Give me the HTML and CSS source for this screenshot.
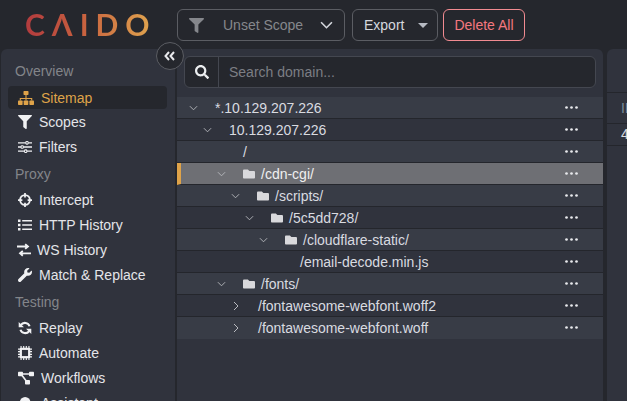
FILE: index.html
```html
<!DOCTYPE html>
<html lang="en">
<head>
<meta charset="utf-8">
<title>Caido Sitemap</title>
<link rel="stylesheet" href="styles.css">
</head>
<body>
<svg class="sprite" aria-hidden="true">
  <symbol id="i-filter" viewBox="0 0 512 512"><path d="M487.976 0H24.028C2.71 0-8.047 25.866 7.058 40.971L192 225.941V432c0 7.831 3.821 15.17 10.237 19.662l80 55.98C298.02 518.69 320 507.493 320 487.98V225.941l184.947-184.97C520.021 25.896 509.338 0 487.976 0z"/></symbol>
  <symbol id="i-search" viewBox="0 0 512 512"><path d="M505 442.7L405.3 343c-4.5-4.5-10.6-7-17-7H372c27.6-35.3 44-79.7 44-128C416 93.1 322.9 0 208 0S0 93.1 0 208s93.1 208 208 208c48.3 0 92.7-16.4 128-44v16.3c0 6.4 2.5 12.5 7 17l99.7 99.7c9.4 9.4 24.6 9.4 33.9 0l28.3-28.3c9.4-9.4 9.4-24.6.1-34zM208 336c-70.7 0-128-57.2-128-128 0-70.7 57.2-128 128-128 70.7 0 128 57.2 128 128 0 70.7-57.2 128-128 128z"/></symbol>
  <symbol id="i-folder" viewBox="0 0 512 512"><path d="M464 128H272l-64-64H48C21.49 64 0 85.49 0 112v288c0 26.51 21.49 48 48 48h416c26.51 0 48-21.49 48-48V176c0-26.51-21.49-48-48-48z"/></symbol>
  <symbol id="i-wrench" viewBox="0 0 512 512"><path d="M507.73 109.1c-2.24-9.03-13.54-12.09-20.12-5.51l-74.36 74.36-67.88-11.31-11.31-67.88 74.36-74.36c6.62-6.62 3.43-17.9-5.66-20.16-47.38-11.74-99.55.91-136.58 37.93-39.64 39.64-50.55 97.1-34.05 147.2L18.74 402.76c-24.99 24.99-24.99 65.51 0 90.5 24.99 24.99 65.51 24.99 90.5 0l213.21-213.21c50.12 16.71 107.47 5.68 147.37-34.22 37.07-37.07 49.7-89.32 37.91-136.73z"/></symbol>
  <symbol id="i-sitemap" viewBox="0 0 16 14"><path d="M8 4v3.500M2.300 9.500V7.500h11.400v2M8 7.500v2" fill="none" stroke="currentColor" stroke-width="1.100"/><rect x="5.500" width="5" height="4" rx=".7"/><rect y="9.500" width="4.600" height="4.500" rx=".7"/><rect x="5.700" y="9.500" width="4.600" height="4.500" rx=".7"/><rect x="11.400" y="9.500" width="4.600" height="4.500" rx=".7"/></symbol>
  <symbol id="i-sliders" viewBox="0 0 16 14"><g fill="none" stroke="currentColor" stroke-width="1.500"><path d="M0 2.200h16M0 7h16M0 11.800h16"/></g><g stroke="currentColor" stroke-width="1.200" fill="#30333d"><rect x="9" y=".7" width="2.600" height="3" rx="1"/><rect x="3.500" y="5.500" width="2.600" height="3" rx="1"/><rect x="7.500" y="10.300" width="2.600" height="3" rx="1"/></g></symbol>
  <symbol id="i-crosshair" viewBox="0 0 16 16"><circle cx="8" cy="8" r="5.600" fill="none" stroke="currentColor" stroke-width="2.200"/><path d="M8 0v5M8 11v5M0 8h5M11 8h5" stroke="currentColor" stroke-width="2"/></symbol>
  <symbol id="i-list" viewBox="0 0 14 12"><path d="M0 .5h2.500v2.500H0zM0 4.800h2.500v2.500H0zM0 9h2.500v2.500H0zM4.200 1h9.800v1.500H4.200zM4.200 5.300h9.800v1.500H4.200zM4.200 9.500h9.800v1.500H4.200z"/></symbol>
  <symbol id="i-swap" viewBox="0 0 14 13"><path d="M0 3h10.500M8.200.6 11 3 8.200 5.400M14 9.800H3.500M5.800 7.400 3 9.800l2.800 2.400" fill="none" stroke="currentColor" stroke-width="1.800"/></symbol>
  <symbol id="i-replay" viewBox="0 0 16 16"><path d="M13.200 6A5.600 5.600 0 0 0 3.300 4.500M2.800 10a5.600 5.600 0 0 0 9.900 1.500" fill="none" stroke="currentColor" stroke-width="2.400"/><path d="M.8 1.200v6h6zM15.200 14.800v-6h-6z"/></symbol>
  <symbol id="i-chip" viewBox="0 0 16 16"><path d="M3.500 0v16M6.500 0v16M9.500 0v16M12.500 0v16M0 3.500h16M0 6.500h16M0 9.500h16M0 12.500h16" stroke="currentColor" stroke-width="1.300"/><rect x="2" y="2" width="12" height="12" rx="1.500"/><rect x="4.500" y="4.500" width="7" height="7" fill="#30333d"/></symbol>
  <symbol id="i-flow" viewBox="0 0 16 14"><path d="M3 3h10M3 3l6 8" fill="none" stroke="currentColor" stroke-width="1.600"/><rect width="5" height="4.500" y=".8" rx=".8"/><rect x="11" y=".8" width="5" height="4.500" rx=".8"/><rect x="7" y="9" width="5" height="4.500" rx=".8"/></symbol>
  <symbol id="i-bot" viewBox="0 0 16 16"><circle cx="7" cy="7" r="6"/><path d="M12 6h3v3h-3z"/></symbol>
  <symbol id="i-down" viewBox="0 0 10 6"><path d="M1 1l4 4 4-4" fill="none" stroke="currentColor" stroke-width="1"/></symbol>
  <symbol id="i-right" viewBox="0 0 6 10"><path d="M1 1l4 4-4 4" fill="none" stroke="currentColor" stroke-width="1"/></symbol>
  <symbol id="i-dots" viewBox="0 0 13 3"><circle cx="1.500" cy="1.500" r="1.350"/><circle cx="6.500" cy="1.500" r="1.350"/><circle cx="11.500" cy="1.500" r="1.350"/></symbol>
  <symbol id="i-collapse" viewBox="0 0 11 10"><path d="M5 1 1.500 5 5 9M10 1 6.500 5 10 9" fill="none" stroke="currentColor" stroke-width="2"/></symbol>
</svg>
<div class="app">
  <header class="topbar">
    <div class="logo">CΛIDO</div>
    <div class="actions">
      <button class="btn scope">
        <svg class="ico-scope"><use href="#i-filter"/></svg>
        <span class="scope-label">Unset Scope</span>
        <svg class="ico-scope-caret" viewBox="0 0 12 7"><path d="M1 1l5 5 5-5" fill="none" stroke="currentColor" stroke-width="1.500"/></svg>
      </button>
      <button class="btn export">Export <span class="caret"></span></button>
      <button class="btn danger">Delete All</button>
    </div>
  </header>
  <div class="workspace">
    <button class="collapse" aria-label="Collapse"><svg class="ico-collapse"><use href="#i-collapse"/></svg></button>
    <nav class="sidebar">
      <h2 class="group">Overview</h2>
      <a class="item active"><svg class="ic w16"><use href="#i-sitemap"/></svg>Sitemap</a>
      <a class="item"><svg class="ic w14"><use href="#i-filter"/></svg>Scopes</a>
      <a class="item"><svg class="ic w14"><use href="#i-sliders"/></svg>Filters</a>
      <h2 class="group">Proxy</h2>
      <a class="item"><svg class="ic w14"><use href="#i-crosshair"/></svg>Intercept</a>
      <a class="item"><svg class="ic w14"><use href="#i-list"/></svg>HTTP History</a>
      <a class="item"><svg class="ic w12"><use href="#i-swap"/></svg>WS History</a>
      <a class="item"><svg class="ic w14"><use href="#i-wrench"/></svg>Match &amp; Replace</a>
      <h2 class="group">Testing</h2>
      <a class="item"><svg class="ic w14"><use href="#i-replay"/></svg>Replay</a>
      <a class="item"><svg class="ic w14"><use href="#i-chip"/></svg>Automate</a>
      <a class="item"><svg class="ic w16"><use href="#i-flow"/></svg>Workflows</a>
      <a class="item"><svg class="ic w16"><use href="#i-bot"/></svg>Assistant</a>
    </nav>
    <main class="panel tree-panel">
      <div class="search">
        <span class="search-addon"><svg class="ico-search"><use href="#i-search"/></svg></span>
        <span class="search-input">Search domain...</span>
      </div>
      <ul class="tree">
        <li class="row alt d0"><svg class="chev-d"><use href="#i-down"/></svg><span>*.10.129.207.226</span><svg class="more"><use href="#i-dots"/></svg></li>
        <li class="row d1"><svg class="chev-d"><use href="#i-down"/></svg><span>10.129.207.226</span><svg class="more"><use href="#i-dots"/></svg></li>
        <li class="row alt d2"><span class="chev-none"></span><span>/</span><svg class="more"><use href="#i-dots"/></svg></li>
        <li class="row selected d2"><svg class="chev-d"><use href="#i-down"/></svg><svg class="folder"><use href="#i-folder"/></svg><span>/cdn-cgi/</span><svg class="more"><use href="#i-dots"/></svg></li>
        <li class="row alt d3"><svg class="chev-d"><use href="#i-down"/></svg><svg class="folder"><use href="#i-folder"/></svg><span>/scripts/</span><svg class="more"><use href="#i-dots"/></svg></li>
        <li class="row d4"><svg class="chev-d"><use href="#i-down"/></svg><svg class="folder"><use href="#i-folder"/></svg><span>/5c5dd728/</span><svg class="more"><use href="#i-dots"/></svg></li>
        <li class="row alt d5"><svg class="chev-d"><use href="#i-down"/></svg><svg class="folder"><use href="#i-folder"/></svg><span>/cloudflare-static/</span><svg class="more"><use href="#i-dots"/></svg></li>
        <li class="row d6"><span class="chev-none"></span><span>/email-decode.min.js</span><svg class="more"><use href="#i-dots"/></svg></li>
        <li class="row alt d2"><svg class="chev-d"><use href="#i-down"/></svg><svg class="folder"><use href="#i-folder"/></svg><span>/fonts/</span><svg class="more"><use href="#i-dots"/></svg></li>
        <li class="row d3"><svg class="chev-r"><use href="#i-right"/></svg><span>/fontawesome-webfont.woff2</span><svg class="more"><use href="#i-dots"/></svg></li>
        <li class="row alt d3"><svg class="chev-r"><use href="#i-right"/></svg><span>/fontawesome-webfont.woff</span><svg class="more"><use href="#i-dots"/></svg></li>
      </ul>
    </main>
    <section class="panel side-panel">
      <div class="side-head">ID</div>
      <div class="side-cell">4</div>
    </section>
  </div>
</div>
</body>
</html>
```
FILE: styles.css
```css
* { box-sizing: border-box; }
html, body { margin: 0; height: 100%; }
body {
  background: #25272d;
  color: #e4e5e9;
  font: 14px/20px "Liberation Sans", sans-serif;
  overflow: hidden;
}
.sprite { display: none; }
svg { fill: currentColor; display: block; flex: none; }
.app { width: 627px; height: 401px; display: flex; flex-direction: column; overflow: hidden; }

.topbar { height: 49px; flex: none; display: flex; align-items: flex-start; }
.logo {
  width: 177px;
  flex: none;
  padding: 6px 0 0 25px;
  font: 700 30px/36px Lato, sans-serif;
  letter-spacing: 7px;
  color: transparent;
  background: linear-gradient(90deg, #b23b3e 25px, #c9633f 85px, #dfa24e 150px);
  -webkit-background-clip: text;
  background-clip: text;
}
.actions { display: flex; padding-top: 9px; }
.btn {
  height: 32px;
  border: 1px solid #5b5d63;
  border-radius: 6px;
  background: transparent;
  color: #d5d8de;
  font: inherit;
  display: flex;
  align-items: center;
  padding: 0;
}
.scope { width: 168px; padding-left: 11px; color: #85878c; }
.ico-scope { width: 15px; height: 15px; color: #85878c; }
.scope-label { margin-left: 19px; }
.ico-scope-caret { width: 13px; height: 8px; margin-left: 17px; color: #d5d8de; }
.export { width: 86px; margin-left: 7px; padding-left: 11px; gap: 14px; }
.caret { width: 0; height: 0; border: 5px solid transparent; border-top: 5px solid #b6bac2; border-bottom: 0; }
.danger { width: 82px; margin-left: 5px; justify-content: center; border-color: #f28b91; color: #f4777f; }

.workspace { flex: 1; display: flex; position: relative; min-height: 0; padding-left: 1px; }
.collapse {
  position: absolute;
  left: 156px;
  top: -7px;
  width: 28px;
  height: 28px;
  border-radius: 50%;
  border: 1px solid #5b5d63;
  background: #25272d;
  color: #e8e9ec;
  padding: 0 2px 0 0;
  display: flex;
  align-items: center;
  justify-content: center;
  z-index: 2;
}
.ico-collapse { width: 11px; height: 10px; }
.sidebar {
  width: 174px;
  flex: none;
  background: #30333d;
  border-radius: 6px 6px 0 0;
  padding: 12px 7px 0;
  overflow: hidden;
}
.group { margin: 0; font: 400 14px/20px "Liberation Sans", sans-serif; color: #83858a; padding-left: 7px; height: 20px; }
.item + .group { margin-top: 5px; }
.group + .item { margin-top: 4px; }
.sidebar > .group:first-child + .item { margin-top: 5px; height: 23px; }
.item {
  height: 24px;
  margin-bottom: 1px;
  padding-left: 10px;
  width: 159px;
  display: flex;
  align-items: center;
  gap: 7px;
  border-radius: 4px;
  color: #e4e5e9;
}
.item.active { background: #25272d; color: #dfa349; }
.ic { height: 14px; color: #f0f1f3; }
.active .ic { color: #dfa349; }
.w16 { width: 16px; }
.w14 { width: 14px; }
.w12 { width: 14px; margin-left: -1px; margin-right: -1px; }

.panel { background: #30333d; border-radius: 6px 6px 0 0; }
.tree-panel { width: 426px; margin-left: 2px; flex: none; padding-top: 7px; }
.search {
  margin: 0 7px 0;
  height: 32px;
  width: 412px;
  background: #25272d;
  border: 1px solid #444750;
  border-radius: 6px;
  display: flex;
  align-items: center;
}
.search-addon { width: 34px; height: 100%; border-right: 1px solid #444750; display: flex; align-items: center; justify-content: center; }
.ico-search { width: 14px; height: 14px; color: #eceef0; }
.search-input { padding-left: 10px; color: #7c7e84; }
.tree { list-style: none; margin: 9px 0 0; padding: 0; }
.row {
  height: 22px;
  display: flex;
  align-items: center;
  border-bottom: 1px solid #24262c;
  background: #30333d;
  position: relative;
  color: #d9dbe0;
}
.row.alt { background: #383c46; }
.row.selected { background: #6e6f74; border-left: 4px solid #dfa349; color: #f0f0f0; }
.row.selected .chev-d { margin-left: -4px; }
.row:last-child { border-bottom: 0; }
.d0 { padding-left: 12px; }
.d1 { padding-left: 26px; }
.d2 { padding-left: 40px; }
.d3 { padding-left: 54px; }
.d4 { padding-left: 68px; }
.d5 { padding-left: 82px; }
.d6 { padding-left: 97px; }
.chev-d { width: 9px; height: 6px; color: #b9bbc0; }
.chev-r { width: 6px; height: 10px; color: #b9bbc0; margin-left: 2px; }
.chev-r + span { margin-left: 19px; }
.chev-none { width: 9px; }
.chev-d + span, .chev-none + span { margin-left: 17px; }
.chev-d + .folder { margin-left: 17px; }
.folder { width: 12px; height: 12px; color: #d9d9dc; margin-right: 6px; }
.more {
  position: absolute;
  left: 388px;
  top: 9px;
  width: 13px;
  height: 3px;
  color: #e8e9ec;
}
.selected .more { left: 384px; }

.side-panel { flex: 1; margin-left: 4px; padding-top: 43px; }
.side-head { height: 32px; border-top: 1px solid #24262c; border-bottom: 1px solid #24262c; padding-left: 14px; line-height: 30px; color: #7c8a9b; background: #30333d; }
.side-cell { height: 22px; border-bottom: 1px solid #24262c; padding-left: 14px; line-height: 21px; color: #d9dbe0; }
```
